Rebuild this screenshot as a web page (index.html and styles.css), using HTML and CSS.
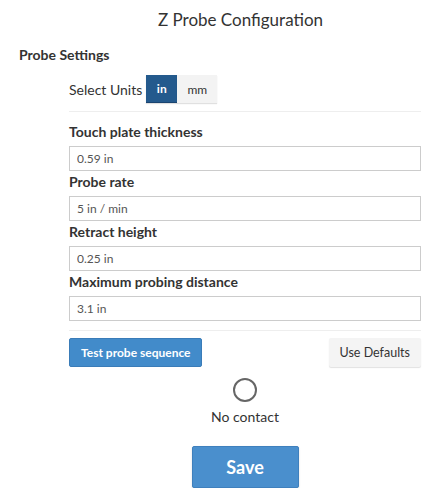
FILE: index.html
```html
<!DOCTYPE html>
<html lang="en">
<head>
    <meta charset="UTF-8">
    <meta name="viewport" content="width=device-width, initial-scale=1.0">
    <title>Z Probe Configuration</title>
    <link rel="stylesheet" href="styles.css">
</head>
<body>

<div class="dialog">
    <h1 class="title">Z Probe Configuration</h1>
    <h2 class="section-title">Probe Settings</h2>

    <div class="settings">
        <div class="units-row">
            <span class="units-label">Select Units</span>
            <div class="units-group">
                <button class="unit-btn active">in</button>
                <button class="unit-btn">mm</button>
            </div>
        </div>

        <hr class="divider">

        <div class="field">
            <label for="plateThickness">Touch plate thickness</label>
            <input type="text" id="plateThickness" class="input-box" value="0.59 in">
        </div>
        <div class="field">
            <label for="probeRate">Probe rate</label>
            <input type="text" id="probeRate" class="input-box" value="5 in / min">
        </div>
        <div class="field">
            <label for="retractHeight">Retract height</label>
            <input type="text" id="retractHeight" class="input-box" value="0.25 in">
        </div>
        <div class="field">
            <label for="maxDistance">Maximum probing distance</label>
            <input type="text" id="maxDistance" class="input-box" value="3.1 in">
        </div>

        <hr class="divider divider-bottom">

        <div class="actions">
            <button class="btn btn-primary">Test probe sequence</button>
            <button class="btn btn-default">Use Defaults</button>
        </div>

        <div class="status">
            <div class="contact-light"></div>
            <div class="contact-text">No contact</div>
        </div>

        <div class="save-row">
            <button class="save-btn">Save</button>
        </div>
    </div>
</div>

</body>
</html>
```

FILE: styles.css
```css
body {
    font-family: Lato, "Open Sans", sans-serif;
    margin: 0;
    color: #333;
    background: #fff;
}
.dialog {
    padding-top: 10px;
}
.title {
    font-size: 17px;
    font-weight: 400;
    line-height: 20px;
    margin: 0;
    padding-left: 34px;
    text-align: center;
}
.section-title {
    font-size: 14px;
    font-weight: 700;
    line-height: 20px;
    margin: 15px 0 0 19px;
}
.settings {
    margin: 10px 26px 0 69px;
}
.units-row {
    display: flex;
    align-items: center;
    gap: 4px;
}
.units-label {
    font-size: 14px;
}
.units-group {
    display: flex;
}
.unit-btn {
    height: 28px;
    border: 0;
    padding: 0;
    font-family: inherit;
    font-size: 12px;
    background: #f3f3f3;
    color: #333;
    box-shadow: 0 1px 1px rgba(0, 0, 0, 0.12);
}
.unit-btn:first-child {
    width: 31px;
}
.unit-btn:last-child {
    width: 40px;
}
.unit-btn.active {
    background: #245a8d;
    color: #fff;
    font-weight: 700;
    border-bottom: 1px solid #1a4470;
}
.divider {
    border: 0;
    border-top: 1px solid #eee;
    margin: 8px 0 10px;
}
.divider-bottom {
    margin: 9px 0 7px;
}
.field {
    margin-bottom: 1px;
}
.field label {
    display: block;
    font-size: 14px;
    font-weight: 700;
    line-height: 20px;
    margin-bottom: 4px;
}
.input-box {
    display: block;
    box-sizing: border-box;
    width: 100%;
    height: 25px;
    margin: 0;
    padding: 0 7px;
    border: 1px solid #ccc;
    font-family: inherit;
    font-size: 12px;
    color: #555;
}
.actions {
    display: flex;
    justify-content: space-between;
}
.btn {
    height: 29px;
    font-family: inherit;
    font-size: 12.5px;
    padding: 0 11px;
    border-radius: 2px;
}
.btn-primary {
    font-size: 12px;
    background: #428bca;
    border: 1px solid #3a7cb8;
    color: #fff;
    font-weight: 700;
}
.btn-default {
    background: #f4f4f4;
    border: 0;
    color: #333;
    box-shadow: 0 1px 1px rgba(0, 0, 0, 0.12);
}
.status {
    display: flex;
    flex-direction: column;
    align-items: center;
    margin-top: 11px;
}
.contact-light {
    width: 20px;
    height: 20px;
    border: 2px solid #666;
    border-radius: 50%;
}
.contact-text {
    font-size: 14px;
    line-height: 20px;
    margin-top: 5px;
}
.save-row {
    display: flex;
    justify-content: center;
    margin-top: 19px;
}
.save-btn {
    width: 107px;
    height: 42px;
    background: #4a8fcd;
    border: 1px solid #3f80bd;
    border-radius: 2px;
    color: #fff;
    font-family: inherit;
    font-size: 18px;
    font-weight: 700;
    box-shadow: 0 1px 2px rgba(0, 0, 0, 0.15);
}
```
